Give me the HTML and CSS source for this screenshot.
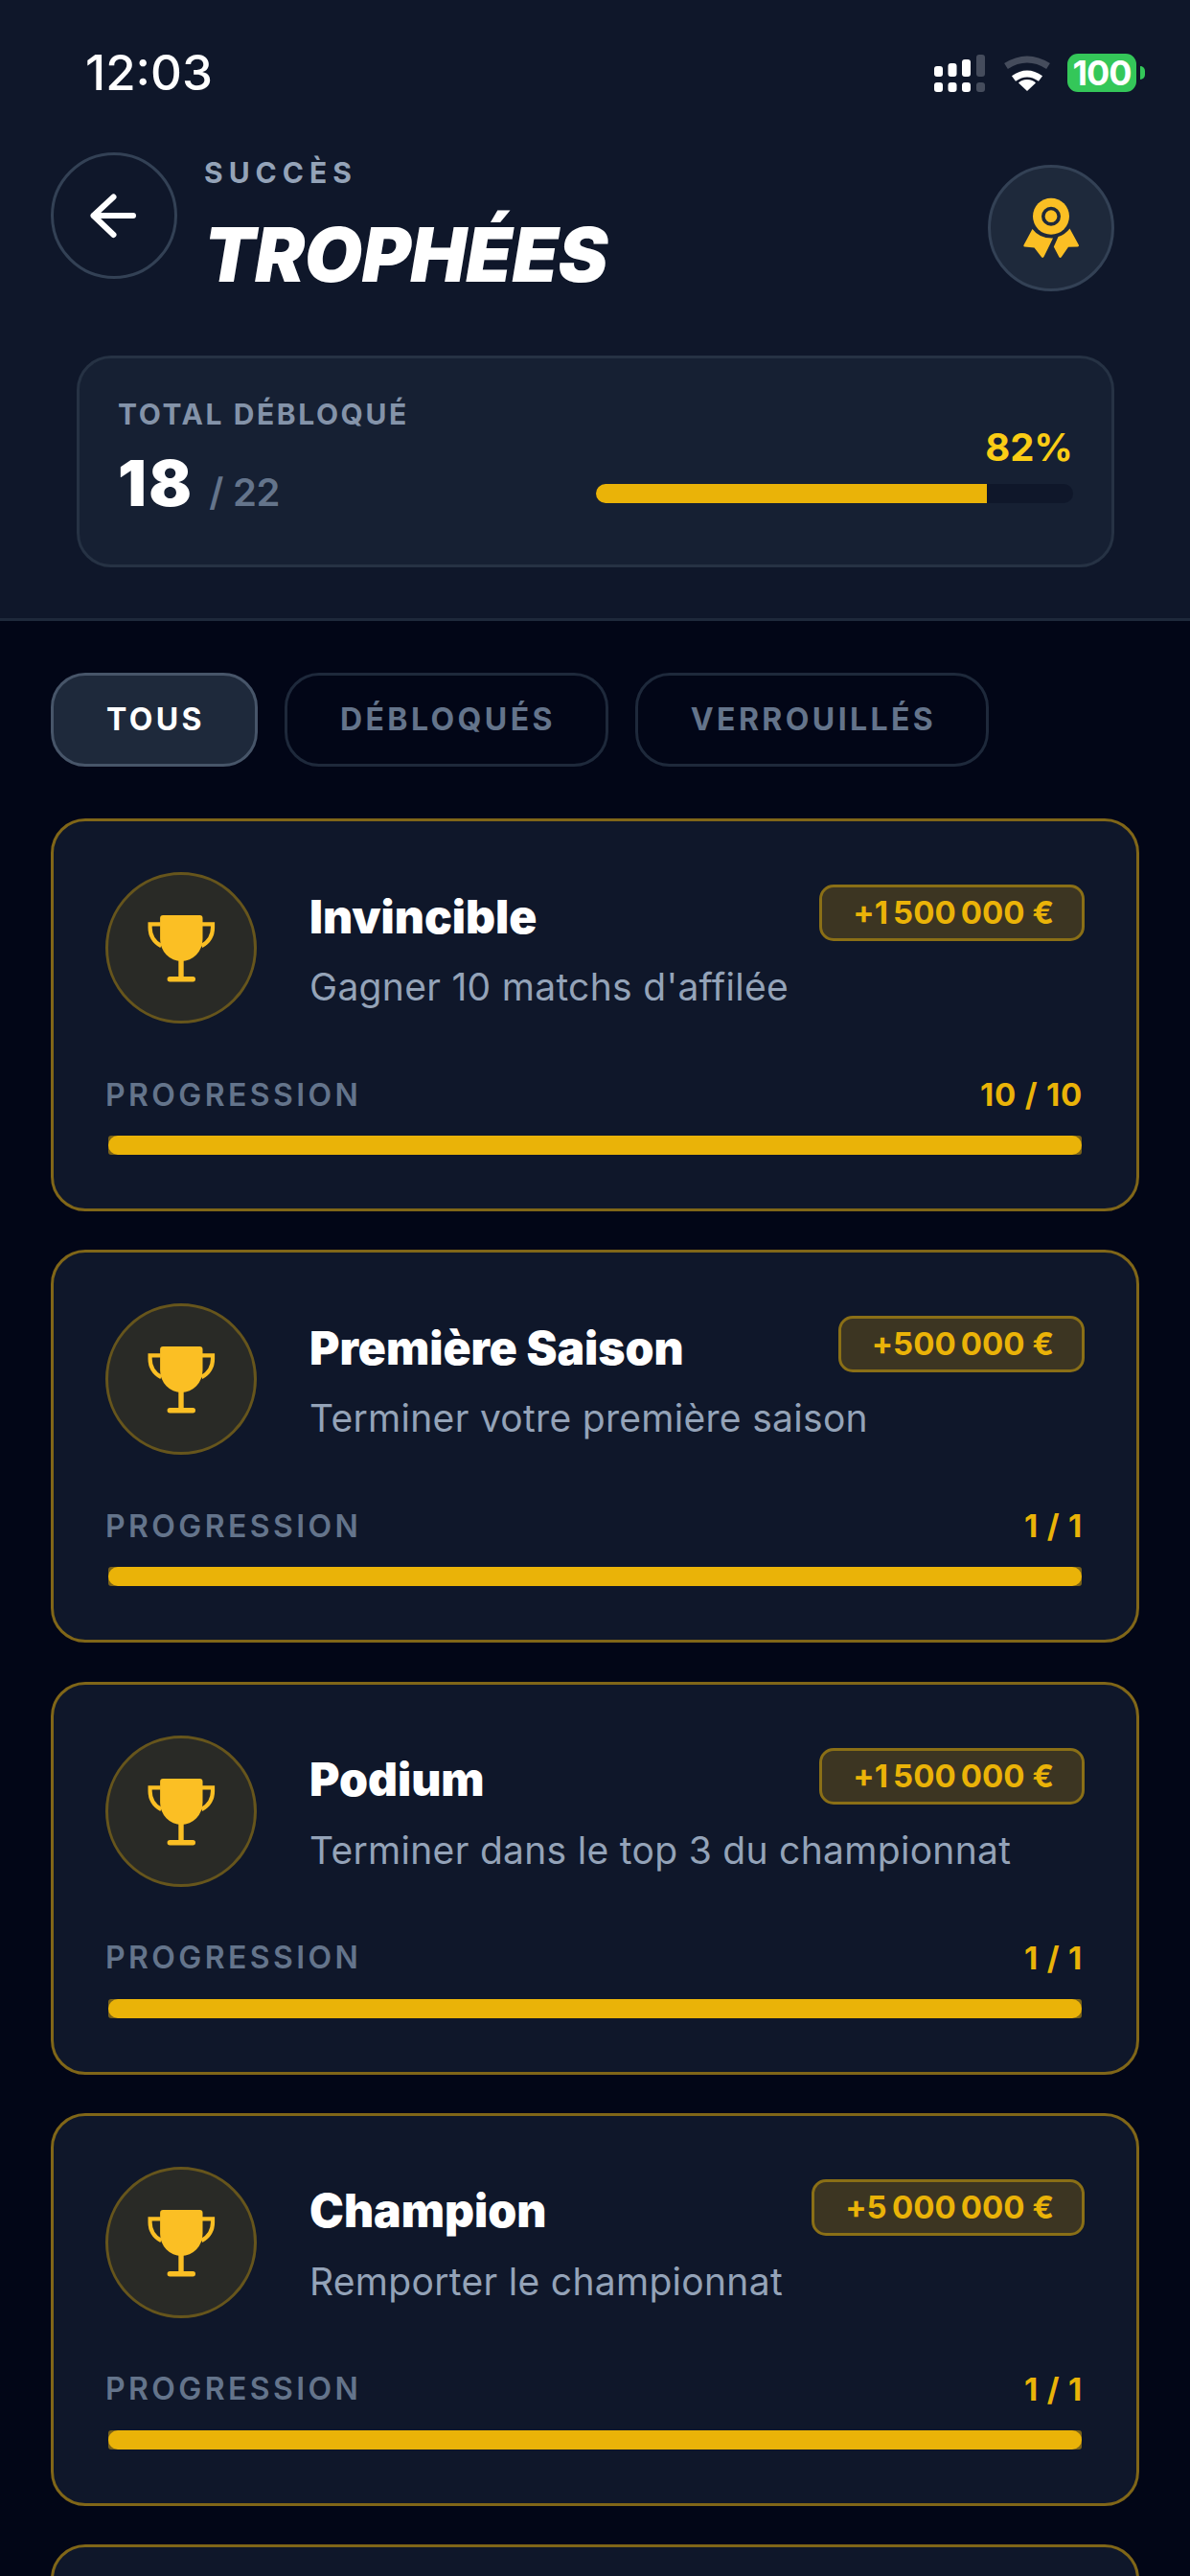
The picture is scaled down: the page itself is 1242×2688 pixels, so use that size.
FILE: index.html
```html
<!DOCTYPE html>
<html lang="fr">
  <head>
    <meta charset="UTF-8" />
    <meta name="viewport" content="width=device-width, initial-scale=1.0" />
    <title>Trophées</title>
    <link rel="stylesheet" href="styles.css">
  </head>
  <body>
    <header class="header">
      <!-- status bar -->
      <div class="status">
        <span class="time">12:03</span>
        <div class="status-icons">
          <svg class="signal" width="53" height="39" viewBox="0 0 53 39">
            <g fill="#fff">
              <rect x="0" y="12" width="9" height="11" rx="3"/>
              <rect x="14.5" y="9" width="9" height="14" rx="3"/>
              <rect x="29" y="5" width="9" height="18" rx="3"/>
              <rect x="0" y="29" width="9" height="10" rx="3"/>
              <rect x="14.5" y="29" width="9" height="10" rx="3"/>
              <rect x="29" y="29" width="9" height="10" rx="3"/>
            </g>
            <g fill="#454c5c">
              <rect x="44" y="0" width="9" height="23" rx="3"/>
              <rect x="44" y="29" width="9" height="10" rx="3"/>
            </g>
          </svg>
          <svg class="wifi" width="50" height="37" viewBox="0 0 50 37">
            <path d="M3 11Q25-3 47 11" fill="none" stroke="#454c5c" stroke-width="7"/>
            <path d="M11 24Q25 14 39 24" fill="none" stroke="#fff" stroke-width="7"/>
            <path d="M25 25Q19 25 16 28.5L25 37 34 28.5Q31 25 25 25z" fill="#fff"/>
          </svg>
          <div class="battery">100</div>
          <span class="battery-tip"></span>
        </div>
      </div>

      <!-- title -->
      <div class="top">
        <button class="round back">
          <svg width="72" height="72" viewBox="0 0 72 72" fill="none" stroke="#fff" stroke-width="6" stroke-linecap="round" stroke-linejoin="round">
            <path d="M56 36H14.5M35.5 16.5L14.5 36l21 20"/>
          </svg>
        </button>
        <div class="heading">
          <div class="eyebrow">SUCCÈS</div>
          <h1 class="title">TROPHÉES</h1>
        </div>
        <button class="round medal">
          <svg width="60" height="68" viewBox="56 45 60 68">
            <circle cx="86" cy="66.7" r="19" fill="#fbbf24"/>
            <circle cx="86" cy="66.7" r="8.2" fill="none" stroke="#1e293b" stroke-width="3.6"/>
            <path d="M66.5 80Q74 90 88 89.5L78.6 108.8Q77.5 110.8 76 109.2L68.5 99.5 58.5 98.6Q56.8 98.4 57.6 96.6z" fill="#fbbf24"/>
            <path d="M105.5 79.5Q100.5 86 93.5 88L88.8 98.6 94.4 109.2Q95.5 110.8 96.8 109.2L104 98.8 113.8 98.4Q115.6 98.2 114.8 96.4z" fill="#fbbf24"/>
          </svg>
        </button>
      </div>

      <!-- total -->
      <div class="stat">
        <div>
          <div class="stat-label">TOTAL DÉBLOQUÉ</div>
          <div class="stat-count">18 <span class="stat-max">/ 22</span></div>
        </div>
        <div class="stat-right">
          <div class="stat-percent">82%</div>
          <div class="stat-track"><div class="stat-fill" style="width: 82%"></div></div>
        </div>
      </div>
    </header>

    <nav class="tabs">
      <div class="tab active">TOUS</div>
      <div class="tab">DÉBLOQUÉS</div>
      <div class="tab">VERROUILLÉS</div>
    </nav>

    <main class="list">
      <section class="card">
        <div class="card-top">
          <div class="cup">
            <svg width="72" height="72" viewBox="0 0 24 24"><use href="#trophy"/></svg>
          </div>
          <div class="card-body">
            <div class="card-row">
              <h2 class="card-title">Invincible</h2>
              <span class="reward">+1&#8239;500&#8239;000&nbsp;€</span>
            </div>
            <p class="card-desc">Gagner 10 matchs d'affilée</p>
          </div>
        </div>
        <div class="progress-row">
          <span class="progress-label">PROGRESSION</span>
          <span class="progress-value">10 / 10</span>
        </div>
        <div class="bar"><div class="bar-fill" style="width: 100%"></div></div>
      </section>

      <section class="card">
        <div class="card-top">
          <div class="cup">
            <svg width="72" height="72" viewBox="0 0 24 24"><use href="#trophy"/></svg>
          </div>
          <div class="card-body">
            <div class="card-row">
              <h2 class="card-title">Première Saison</h2>
              <span class="reward">+500&#8239;000&nbsp;€</span>
            </div>
            <p class="card-desc">Terminer votre première saison</p>
          </div>
        </div>
        <div class="progress-row">
          <span class="progress-label">PROGRESSION</span>
          <span class="progress-value">1 / 1</span>
        </div>
        <div class="bar"><div class="bar-fill" style="width: 100%"></div></div>
      </section>

      <section class="card">
        <div class="card-top">
          <div class="cup">
            <svg width="72" height="72" viewBox="0 0 24 24"><use href="#trophy"/></svg>
          </div>
          <div class="card-body">
            <div class="card-row">
              <h2 class="card-title">Podium</h2>
              <span class="reward">+1&#8239;500&#8239;000&nbsp;€</span>
            </div>
            <p class="card-desc">Terminer dans le top 3 du championnat</p>
          </div>
        </div>
        <div class="progress-row">
          <span class="progress-label">PROGRESSION</span>
          <span class="progress-value">1 / 1</span>
        </div>
        <div class="bar"><div class="bar-fill" style="width: 100%"></div></div>
      </section>

      <section class="card">
        <div class="card-top">
          <div class="cup">
            <svg width="72" height="72" viewBox="0 0 24 24"><use href="#trophy"/></svg>
          </div>
          <div class="card-body">
            <div class="card-row">
              <h2 class="card-title">Champion</h2>
              <span class="reward">+5&#8239;000&#8239;000&nbsp;€</span>
            </div>
            <p class="card-desc">Remporter le championnat</p>
          </div>
        </div>
        <div class="progress-row">
          <span class="progress-label">PROGRESSION</span>
          <span class="progress-value">1 / 1</span>
        </div>
        <div class="bar"><div class="bar-fill" style="width: 100%"></div></div>
      </section>

      <!-- next card, cut off by the bottom of the screen -->
      <section class="card"></section>
    </main>

    <svg class="defs" width="0" height="0">
      <symbol id="trophy" viewBox="0 0 24 24">
        <path d="M5.7.7H18.5a1 1 0 0 1 1 1V9a7.4 7.7 0 0 1-14.8 0V1.7a1 1 0 0 1 1-1z" fill="#fbbf24"/>
        <rect x="11.1" y="16" width="1.8" height="7" fill="#fbbf24"/>
        <rect x="7.2" y="22" width="9.8" height="1.8" rx=".9" fill="#fbbf24"/>
        <path d="M4.9 3.8H1.2V5c0 3 1.4 5 3.9 6.4M19.3 3.8h3.7V5c0 3-1.4 5-3.9 6.4" fill="none" stroke="#fbbf24" stroke-width="1.4"/>
      </symbol>
    </svg>
  </body>
</html>
```

FILE: styles.css
```css
html,
body {
  margin: 0;
  height: 2688px;
  overflow: hidden;
  background: #020617;
  font-family: Inter, "Liberation Sans", sans-serif;
}
h1,
h2,
p {
  margin: 0;
}

.header {
  height: 648px;
  box-sizing: border-box;
  padding-top: 56px;
  background: #0f172a;
  border-bottom: 3px solid #1e293b;
}

/* status bar */
.status {
  display: flex;
  justify-content: space-between;
  align-items: center;
  height: 40px;
  padding: 0 47px 0 89px;
}
.time {
  font-size: 51px;
  font-weight: 500;
  line-height: 40px;
  color: #fff;
}
.status-icons {
  display: flex;
  align-items: center;
}
.wifi {
  margin-left: 19px;
}
.battery {
  width: 72px;
  height: 40px;
  margin-left: 17px;
  background: #34c759;
  border-radius: 11px;
  color: #fff;
  font-size: 36px;
  font-weight: 700;
  line-height: 40px;
  letter-spacing: -1px;
  text-align: center;
}
.battery-tip {
  width: 5px;
  height: 14px;
  margin-left: 4px;
  background: #34c759;
  border-radius: 0 5px 5px 0;
}

/* title row */
.top {
  display: flex;
  align-items: flex-start;
  height: 146px;
  margin-top: 63px;
  padding: 0 79px 0 53px;
}
.round {
  display: flex;
  align-items: center;
  justify-content: center;
  flex: none;
  width: 132px;
  height: 132px;
  padding: 0;
  border-radius: 50%;
  border: 3px solid #334155;
  background: transparent;
}
.medal {
  margin: 13px 0 0 auto;
  background: #1e293b;
}
.heading {
  margin-left: 28px;
  padding-top: 3px;
}
.eyebrow {
  font-size: 30px;
  font-weight: 700;
  line-height: 36px;
  letter-spacing: 6px;
  color: #94a3b8;
}
.title {
  margin-top: 29px;
  font-size: 78px;
  font-weight: 900;
  font-style: italic;
  line-height: 78px;
  letter-spacing: -.5px;
  color: #fff;
}

/* total card */
.stat {
  display: flex;
  height: 221px;
  box-sizing: border-box;
  margin: 66px 79px 0 80px;
  padding: 40px 40px 0;
  background: #162033;
  border: 3px solid #263244;
  border-radius: 36px;
}
.stat-label {
  font-size: 30px;
  font-weight: 700;
  line-height: 36px;
  letter-spacing: 2.6px;
  color: #8493a9;
}
.stat-count {
  margin-top: 21px;
  font-size: 66px;
  font-weight: 900;
  line-height: 66px;
  letter-spacing: 2.5px;
  color: #fff;
}
.stat-max {
  font-size: 40px;
  font-weight: 600;
  letter-spacing: -.3px;
  color: #64748b;
}
.stat-right {
  display: flex;
  flex-direction: column;
  justify-content: flex-end;
  width: 498px;
  height: 111px;
  margin-left: auto;
}
.stat-percent {
  font-size: 40px;
  font-weight: 700;
  line-height: 48px;
  text-align: right;
  color: #facc15;
}
.stat-track {
  height: 20px;
  margin-top: 14px;
  background: #0f172a;
  border-radius: 10px;
}
.stat-fill {
  height: 100%;
  background: #eab308;
  border-radius: 10px 0 0 10px;
}

/* filters */
.tabs {
  display: flex;
  gap: 28px;
  margin-top: 54px;
  padding-left: 53px;
}
.tab {
  height: 98px;
  box-sizing: border-box;
  padding: 0 52px 0 55px;
  border: 3px solid #1e293b;
  border-radius: 36px;
  font-size: 32px;
  font-weight: 700;
  line-height: 92px;
  letter-spacing: 3.4px;
  color: #64748b;
}
.tab.active {
  background: #1e293b;
  border-color: #475569;
  color: #fff;
}

/* trophies */
.list {
  display: flex;
  flex-direction: column;
  gap: 40.3px;
  height: 1834px;
  overflow: hidden;
  margin-top: 54px;
  padding: 0 53px;
}
.card {
  flex: none;
  height: 410px;
  box-sizing: border-box;
  padding: 53px 54px 0;
  background: #0f172a;
  border: 3px solid #806618;
  border-radius: 36px;
}
.card-top {
  display: flex;
}
.cup {
  display: flex;
  align-items: center;
  justify-content: center;
  flex: none;
  width: 158px;
  height: 158px;
  box-sizing: border-box;
  border-radius: 50%;
  border: 3px solid #66551c;
  background: #292a26;
}
.card-body {
  flex: 1;
  margin-left: 55px;
  padding-top: 13px;
}
.card-row {
  display: flex;
  justify-content: space-between;
  align-items: center;
  height: 59px;
}
.card-title {
  padding-top: 8px;
  font-size: 48px;
  font-weight: 900;
  line-height: 54px;
  color: #fff;
}
.reward {
  height: 59px;
  box-sizing: border-box;
  padding: 0 29px 0 32px;
  border: 3px solid #8a6f16;
  border-radius: 15px;
  background: #3c3522;
  font-size: 33px;
  font-weight: 700;
  line-height: 53px;
  letter-spacing: 2.1px;
  color: #eab308;
}
.card-desc {
  margin-top: 24px;
  font-size: 39px;
  line-height: 48px;
  letter-spacing: .3px;
  color: #94a3b8;
}
.progress-row {
  display: flex;
  justify-content: space-between;
  align-items: center;
  height: 36px;
  margin-top: 56px;
  padding-right: 2px;
}
.progress-label {
  font-size: 32px;
  font-weight: 600;
  letter-spacing: 3.4px;
  color: #64748b;
}
.progress-value {
  font-size: 33px;
  font-weight: 700;
  letter-spacing: .8px;
  color: #eab308;
}
.bar {
  height: 20px;
  margin: 25px 3px 0;
  background: #7a6218;
  border-radius: 3px;
}
.bar-fill {
  height: 100%;
  background: #eab308;
  border-radius: 10px;
}
.defs {
  display: none;
}
```
